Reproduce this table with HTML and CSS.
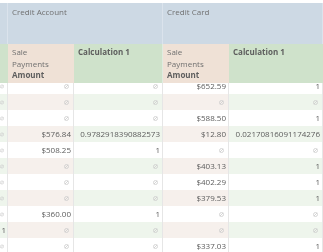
FILE: index.html
```html
<!DOCTYPE html>
<html>
<head>
<meta charset="utf-8">
<link rel="stylesheet" href="styles.css">
</head>
<body>
<div class="sheet">
  <div class="row group-row">
    <div class="cell grp"></div>
    <div class="cell grp span2">Credit Account</div>
    <div class="cell grp span2">Credit Card</div>
  </div>
  <div class="row sub-row">
    <div class="cell sub-green"></div>
    <div class="cell sub-pink">Sale<br>Payments<br><b>Amount</b></div>
    <div class="cell sub-green edge"><b>Calculation 1</b></div>
    <div class="cell sub-pink">Sale<br>Payments<br><b>Amount</b></div>
    <div class="cell sub-green last"><b>Calculation 1</b></div>
  </div>
  <div class="body">
    <div class="rows" id="rows"></div>
  </div>
</div>
<script src="app.js"></script>
</body>
</html>
```
FILE: styles.css
```css
html, body {
  margin: 0;
  padding: 0;
  background: #ffffff;
}
body {
  padding-top: 3px;
  font-family: "Open Sans", "Liberation Sans", sans-serif;
  font-size: 8px;
  color: #5c5c5c;
  width: 323px;
  height: 252px;
  overflow: hidden;
  box-sizing: border-box;
  -webkit-font-smoothing: antialiased;
}
.sheet {
  display: flex;
  flex-direction: column;
  width: 323px;
  will-change: transform;
}
.row {
  display: grid;
  grid-template-columns: 8px 66px 89px 66px 94px;
}
.cell {
  box-sizing: border-box;
  border-right: 1px solid #e6e6e6;
  overflow: hidden;
  white-space: nowrap;
}
.group-row {
  height: 41px;
  background: #cdd9e4;
}
.group-row .cell {
  border-right: 1px solid #dbe3ec;
  padding: 3px 0 0 4px;
  line-height: 12px;
  color: #707070;
}
.group-row .cell:first-child {
  padding: 0;
}
.span2 {
  grid-column: span 2;
}
.sub-row {
  height: 39px;
}
.sub-row .cell {
  padding: 2px 0 0 4px;
  line-height: 11.7px;
  color: #707070;
  white-space: normal;
  border-right: none;
}
.sub-row b {
  font-weight: 700;
  color: #5e5e5e;
}
.sub-green {
  background: #cfe2cb;
}
.sub-pink {
  background: #efe1d6;
}
.sub-row .edge {
  border-right: 1px solid #dfece0;
}
.sub-row .cell:first-child {
  padding: 0;
}
.body {
  height: 169px;
  overflow: hidden;
}
.rows {
  margin-top: -5px;
  display: flex;
  flex-direction: column;
}
.data {
  height: 16px;
  line-height: 16px;
}
.data .cell {
  text-align: right;
  padding-right: 2px;
  display: flex;
  justify-content: flex-end;
  align-items: center;
}
.data .cell:first-child {
  padding-right: 1px;
}
.data.alt .cell {
  background: #eef5ec;
}
.data.alt .cell.p {
  background: #f6f0ec;
}
.nul {
  width: 5px;
  height: 5px;
  display: block;
  margin-right: 2px;
}
```
FILE: app.js
```js
var N = null;
var data = [
  [N, N, N, "$652.59", "1"],
  [N, N, N, N, N],
  [N, N, N, "$588.50", "1"],
  [N, "$576.84", "0.9782918390882573", "$12.80", "0.02170816091174276"],
  [N, "$508.25", "1", N, N],
  [N, N, N, "$403.13", "1"],
  [N, N, N, "$402.29", "1"],
  [N, N, N, "$379.53", "1"],
  [N, "$360.00", "1", N, N],
  ["1", N, N, N, N],
  [N, N, N, "$337.03", "1"]
];
var icon = '<svg class="nul" viewBox="0 0 5 5"><circle cx="2.5" cy="2.5" r="2" fill="none" stroke="#cccccc" stroke-width="0.8"/><line x1="0.8" y1="4.2" x2="4.2" y2="0.8" stroke="#cccccc" stroke-width="0.8"/></svg>';
var html = "";
data.forEach(function (r, i) {
  html += '<div class="row data' + (i % 2 === 1 ? ' alt' : '') + '">';
  r.forEach(function (v, j) {
    var cls = "cell" + ((j === 1 || j === 3) ? " p" : "");
    html += '<div class="' + cls + '">' + (v === null ? icon : v) + '</div>';
  });
  html += '</div>';
});
document.getElementById("rows").innerHTML = html;
```
